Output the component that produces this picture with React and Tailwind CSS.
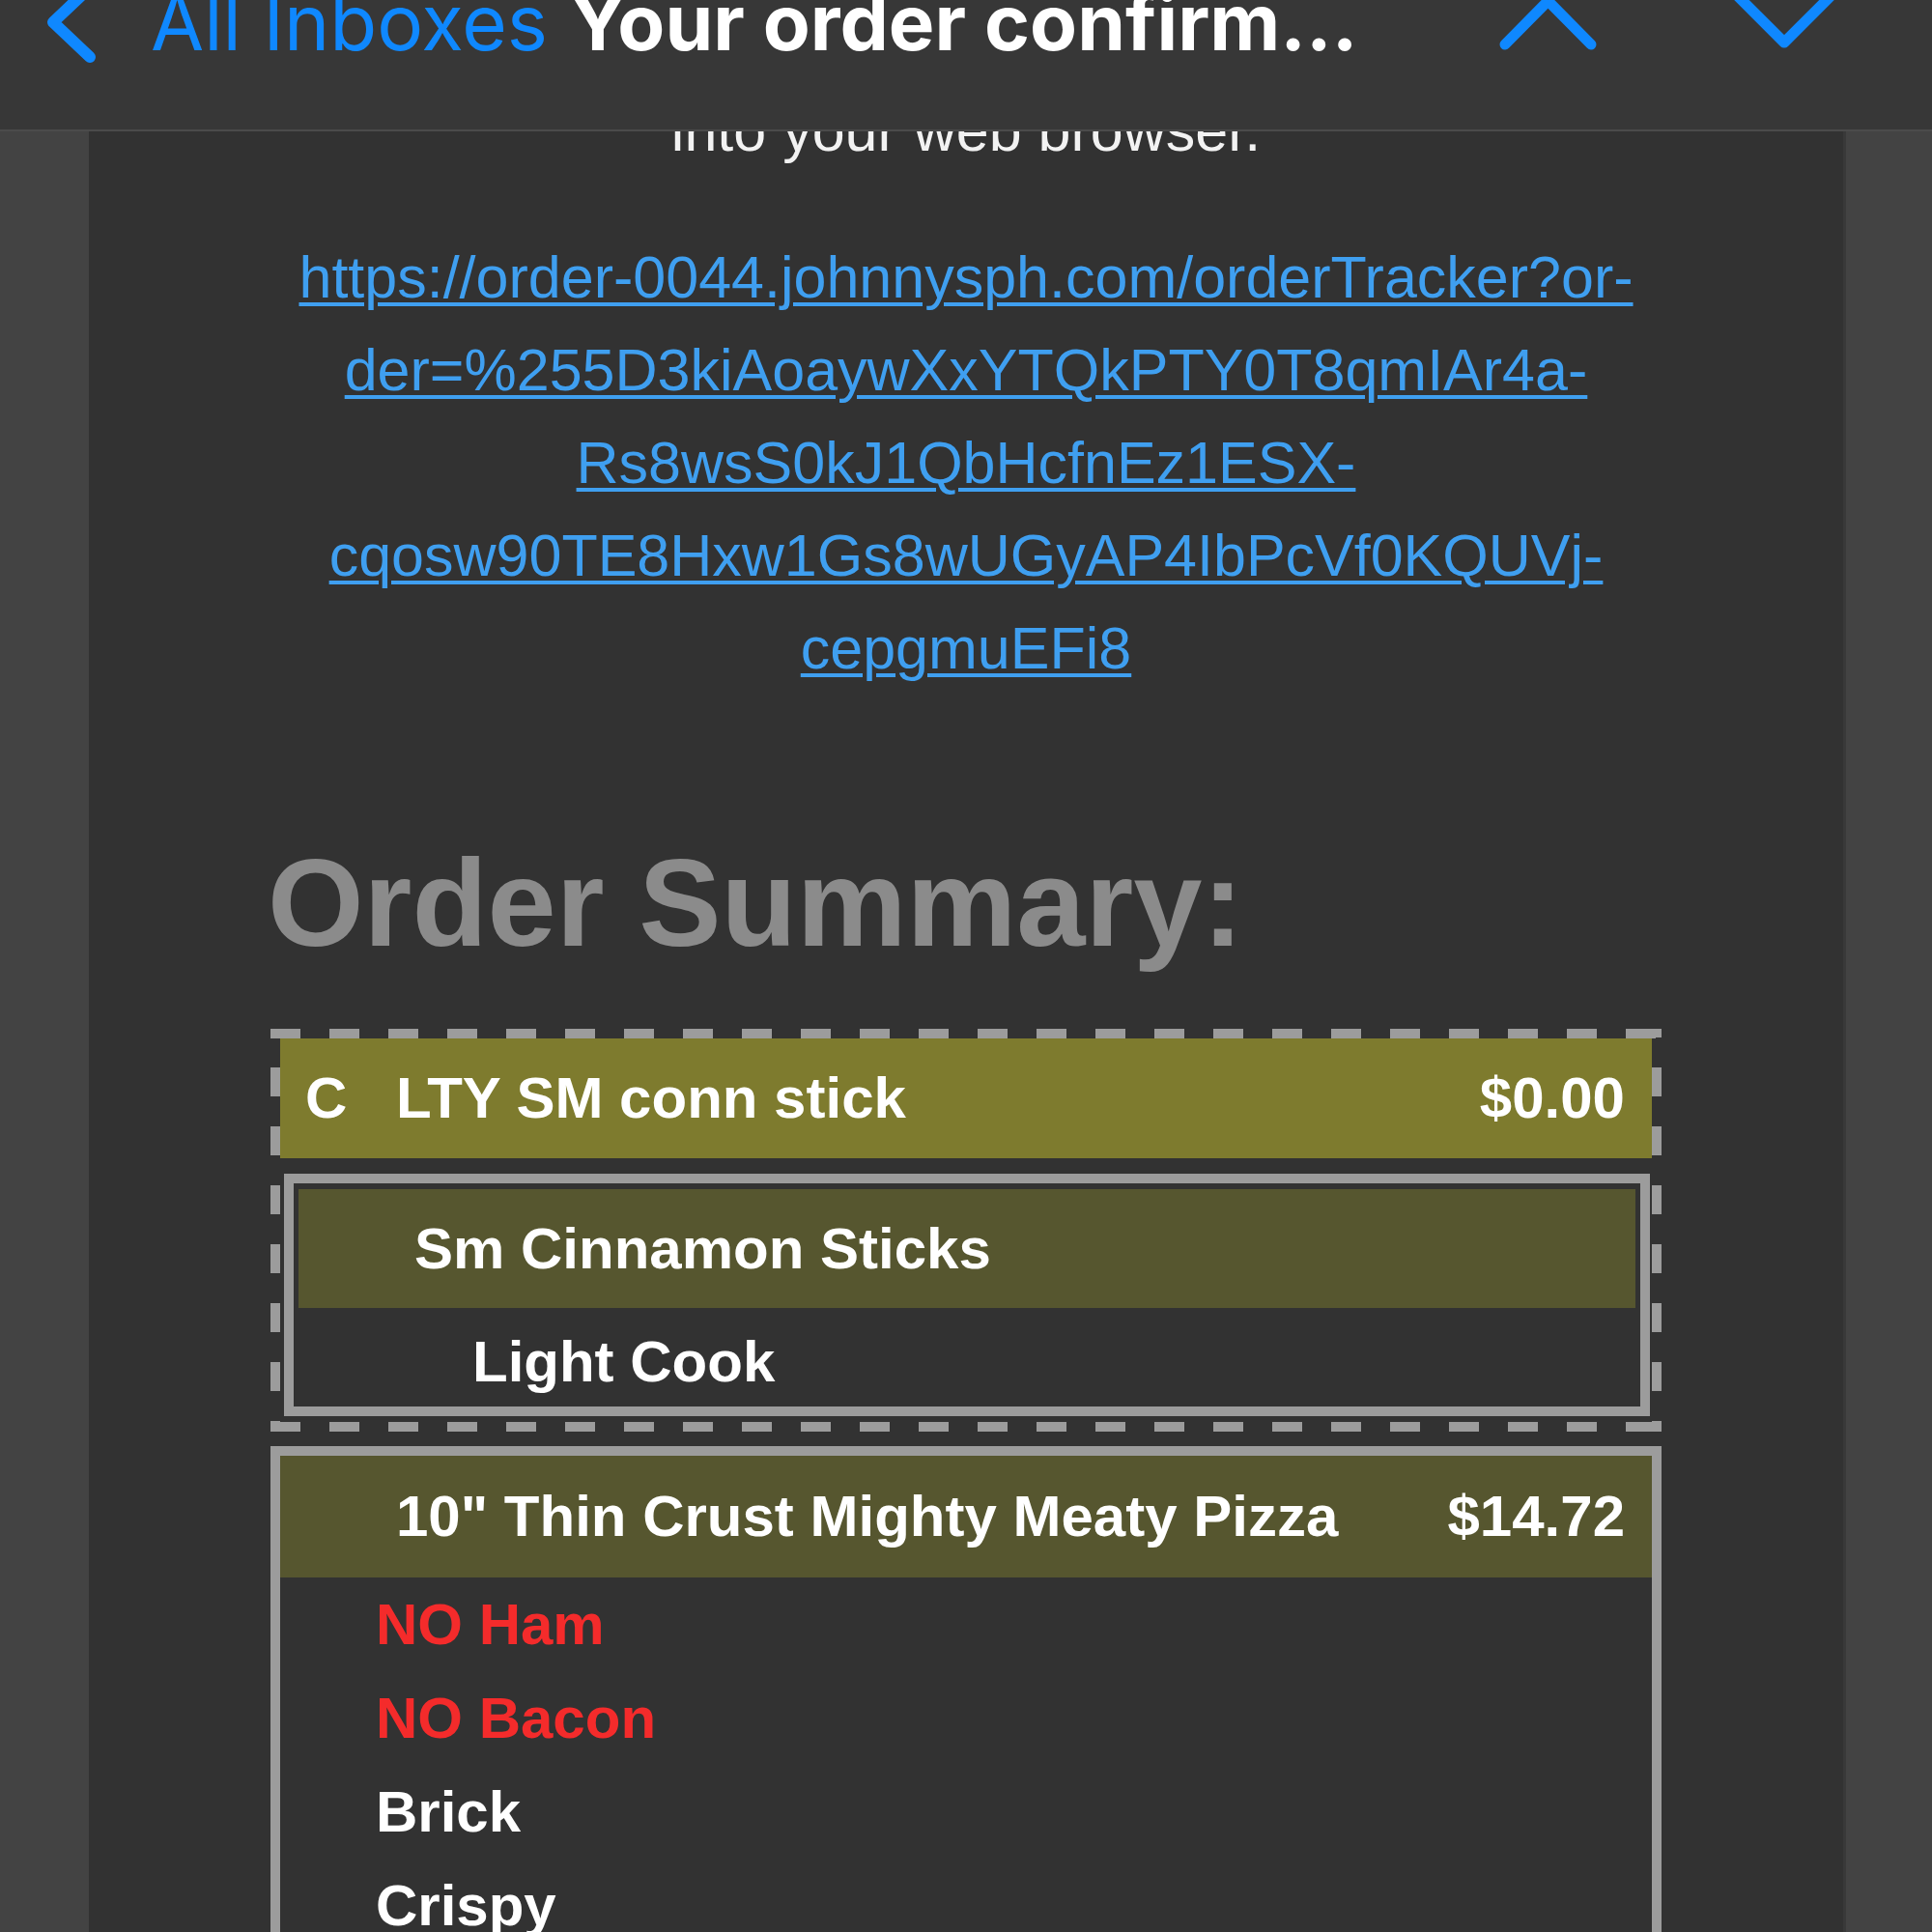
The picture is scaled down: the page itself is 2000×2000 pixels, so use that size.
import React from "react";

// email body font (Helvetica-like)
const bodyFont = "font-['Liberation_Sans',Arial,Helvetica,sans-serif]";

const linkLines = [
  "https://order-0044.johnnysph.com/orderTracker?or-",
  "der=%255D3kiAoaywXxYTQkPTY0T8qmIAr4a-",
  "Rs8wsS0kJ1QbHcfnEz1ESX-",
  "cqosw90TE8Hxw1Gs8wUGyAP4IbPcVf0KQUVj-",
  "cepgmuEFi8",
];

const modifiers = [
  { text: "NO Ham", red: true },
  { text: "NO Bacon", red: true },
  { text: "Brick", red: false },
  { text: "Crispy", red: false },
];

// long dashes like the mail client draws them (30px dash, 61px period)
const dashedFrame =
  "[background:repeating-linear-gradient(90deg,#9c9c9c_0_31px,transparent_31px_61px)_top_left/100%_10px_no-repeat,repeating-linear-gradient(90deg,#9c9c9c_0_31px,transparent_31px_61px)_bottom_left/100%_10px_no-repeat,repeating-linear-gradient(180deg,#9c9c9c_0_9px,transparent_9px_40px,#9c9c9c_40px_61px)_top_left/10px_100%_no-repeat,repeating-linear-gradient(180deg,#9c9c9c_0_9px,transparent_9px_40px,#9c9c9c_40px_61px)_top_right/10px_100%_no-repeat]";

function Header() {
  return (
    <header className="absolute inset-x-0 top-0 z-10 flex h-[136px] items-start border-b-2 border-[#4b4b4b] bg-[#373737] font-['Inter',sans-serif]">
      {/* back chevron */}
      <svg className="ml-[40px] h-[70px] w-[70px] shrink-0" viewBox="0 0 70 70" fill="none">
        <path d="M53 -13 L15 23 L53 59" stroke="#0f88ff" strokeWidth="12" strokeLinecap="round" strokeLinejoin="round" />
      </svg>
      <div className="ml-[46px] -mt-[27px] whitespace-nowrap text-[80px] leading-[100px]">
        <span className="text-[#0f88ff]">All Inboxes</span>{" "}
        <span className="font-bold text-white">Your order confirm...</span>
      </div>
      <div className="ml-auto mr-[90px] flex gap-[120px]">
        <svg className="h-[60px] w-[125px]" viewBox="0 0 125 60" fill="none">
          <path d="M18 46 L62.5 1 L107 46" stroke="#0f88ff" strokeWidth="11" strokeLinecap="round" strokeLinejoin="round" />
        </svg>
        <svg className="h-[60px] w-[125px]" viewBox="0 0 125 60" fill="none">
          <path d="M12 -6 L62 44 L112 -6" stroke="#0f88ff" strokeWidth="11" strokeLinecap="round" strokeLinejoin="round" />
        </svg>
      </div>
    </header>
  );
}

function ItemRow({ qty, name, price, className }) {
  return (
    <div className={`flex font-bold text-[60px] text-white ${className}`}>
      <span className="w-[120px] shrink-0 pl-[26px]">{qty}</span>
      <span className="flex-1 whitespace-nowrap">{name}</span>
      {price && <span className="pr-[28px]">{price}</span>}
    </div>
  );
}

export default function App() {
  return (
    <div className="relative h-[2000px] w-[2000px] overflow-hidden bg-[#434343]">
      <Header />
      <div className="flex h-full">
        <div className="w-[92px] shrink-0 bg-[#434343]" />
        <main className={`w-[1816px] shrink-0 bg-[#323232] pt-[87px] ${bodyFont}`}>
          <div className="mx-auto w-[1440px]">
            <p className="text-center text-[61px] leading-[96px] text-[#f2f2f2]">into your web browser.</p>
            <p className="mt-[56px] text-center text-[61px] leading-[96px] text-[#3f9ff0]">
              {linkLines.map((line) => (
                <React.Fragment key={line}>
                  <span className="underline decoration-[4px] underline-offset-[5px]">{line}</span>
                  <br />
                </React.Fragment>
              ))}
            </p>

            <h2 className="-ml-[3px] mt-[142px] text-[128px] font-bold leading-[147px] text-[#8b8b8b]">Order Summary:</h2>

            {/* coupon line */}
            <div className={`mt-[57px] p-[10px] ${dashedFrame}`}>
              <ItemRow qty="C" name="LTY SM conn stick" price="$0.00" className="h-[124px] bg-[#7e7b2e] leading-[124px]" />
              <div className="mb-[6px] ml-[4px] mr-[2px] mt-[16px] border-[10px] border-[#9c9c9c] px-[5px] pb-[5px] pt-[6px]">
                <ItemRow qty="" name="Sm Cinnamon Sticks" className="h-[123px] bg-[#56562f] leading-[123px]" />
                <div className="h-[97px] pl-[180px] pt-[14px] text-[60px] font-bold leading-[83px] text-white">Light Cook</div>
              </div>
            </div>

            {/* pizza */}
            <div className="mt-[15px] border-[10px] border-[#9c9c9c]">
              <ItemRow qty="" name={'10" Thin Crust Mighty Meaty Pizza'} price="$14.72" className="h-[126px] bg-[#56562f] leading-[126px]" />
              {modifiers.map((m) => (
                <div
                  key={m.text}
                  className={`h-[97px] pl-[99px] text-[60px] font-bold leading-[97px] ${m.red ? "text-[#f42b2b]" : "text-white"}`}
                >
                  {m.text}
                </div>
              ))}
            </div>
          </div>
        </main>
        <div className="flex-1 border-l-[3px] border-[#393939] bg-[#434343]" />
      </div>
    </div>
  );
}
